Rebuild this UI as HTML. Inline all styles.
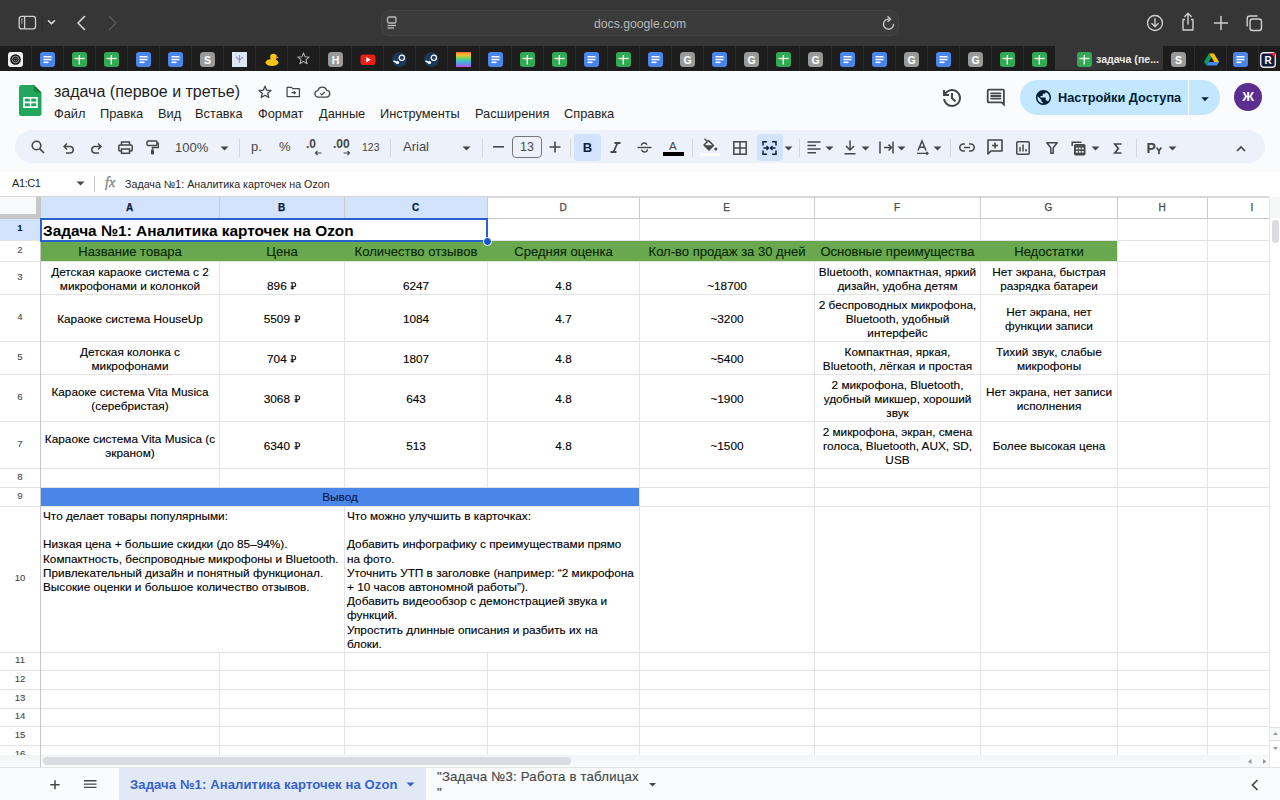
<!DOCTYPE html><html><head><meta charset="utf-8"><style>
*{box-sizing:border-box;margin:0;padding:0}
html,body{width:1280px;height:800px;overflow:hidden;background:#fff;font-family:"Liberation Sans",sans-serif;position:relative}
.a{position:absolute}
svg{position:absolute;overflow:visible}
.t{position:absolute;white-space:nowrap}
.cell{-webkit-text-stroke:0.12px currentColor;position:absolute;display:flex;flex-direction:column;justify-content:center;text-align:center;color:#000;font-size:11.8px;line-height:14.2px;white-space:nowrap;overflow:visible}
</style></head><body>
<div class="a" style="left:0;top:0;width:1280px;height:46px;background:#363636"></div>
<svg style="left:18px;top:15px" width="20" height="16" viewBox="0 0 20 16"><rect x="1.2" y="1.3" width="16.3" height="12.6" rx="2.3" fill="none" stroke="#cfcfcf" stroke-width="1.3"/><line x1="6.6" y1="1.3" x2="6.6" y2="13.9" stroke="#cfcfcf" stroke-width="1.3"/><line x1="3" y1="4.3" x2="4.8" y2="4.3" stroke="#bdbdbd" stroke-width="0.9"/><line x1="3" y1="6.1" x2="4.8" y2="6.1" stroke="#bdbdbd" stroke-width="0.9"/><line x1="3" y1="7.9" x2="4.8" y2="7.9" stroke="#bdbdbd" stroke-width="0.9"/></svg>
<div class="a" style="left:42px;top:16px;width:1px;height:15px;background:#2c2c2c"></div>
<svg style="left:47px;top:19px" width="9" height="7" viewBox="0 0 9 7"><path d="M1.5 1.8 L4.5 4.8 L7.5 1.8" fill="none" stroke="#e0e0e0" stroke-width="1.6" stroke-linecap="round" stroke-linejoin="round"/></svg>
<svg style="left:76px;top:15px" width="10" height="16" viewBox="0 0 10 16"><path d="M8.5 1.5 L2 8 L8.5 14.5" fill="none" stroke="#d8d8d8" stroke-width="1.6" stroke-linecap="round" stroke-linejoin="round"/></svg>
<svg style="left:106px;top:15px" width="12" height="16" viewBox="0 0 12 16"><path d="M3.5 1.5 L10 8 L3.5 14.5" fill="none" stroke="#555555" stroke-width="1.6" stroke-linecap="round" stroke-linejoin="round"/></svg>
<div class="a" style="left:381px;top:10px;width:518px;height:26px;border-radius:8px;background:#3b3b3b;border:1px solid #454545"></div>
<svg style="left:386px;top:16px" width="12" height="14" viewBox="0 0 12 14"><rect x="1.5" y="1" width="8.5" height="6" rx="1.5" fill="none" stroke="#bdbdbd" stroke-width="1.3"/><line x1="1.5" y1="9.5" x2="10" y2="9.5" stroke="#bdbdbd" stroke-width="1.3"/><line x1="1.5" y1="12" x2="8" y2="12" stroke="#bdbdbd" stroke-width="1.3"/></svg>
<div class="t" style="left:594px;top:16.5px;font-size:12.2px;color:#b8b8b8;letter-spacing:0">docs.google.com</div>
<svg style="left:882px;top:16px" width="14" height="15" viewBox="0 0 14 15"><path d="M11.5 8.5 A5 5 0 1 1 7 3.2" fill="none" stroke="#c8c8c8" stroke-width="1.4" stroke-linecap="round"/><path d="M6 0.8 L8.6 3.2 L6 5.6" fill="none" stroke="#c8c8c8" stroke-width="1.4" stroke-linecap="round" stroke-linejoin="round"/></svg>
<svg style="left:1146px;top:14px" width="18" height="18" viewBox="0 0 18 18"><circle cx="9" cy="9" r="7.5" fill="none" stroke="#cfcfcf" stroke-width="1.4"/><path d="M9 4.8 V12.5 M5.8 9.5 L9 12.7 L12.2 9.5" fill="none" stroke="#cfcfcf" stroke-width="1.4" stroke-linecap="round" stroke-linejoin="round"/></svg>
<svg style="left:1180px;top:12px" width="16" height="20" viewBox="0 0 16 20"><path d="M5 7.5 H3 V18 H13 V7.5 H11" fill="none" stroke="#cfcfcf" stroke-width="1.4" stroke-linejoin="round"/><path d="M8 12 V1.5 M4.8 4.5 L8 1.3 L11.2 4.5" fill="none" stroke="#cfcfcf" stroke-width="1.4" stroke-linecap="round" stroke-linejoin="round"/></svg>
<svg style="left:1213px;top:15px" width="16" height="16" viewBox="0 0 16 16"><path d="M8 1.5 V14.5 M1.5 8 H14.5" fill="none" stroke="#d0d0d0" stroke-width="1.5" stroke-linecap="round"/></svg>
<svg style="left:1245px;top:14px" width="18" height="18" viewBox="0 0 18 18"><rect x="5" y="5" width="11.5" height="11.5" rx="2.5" fill="none" stroke="#cfcfcf" stroke-width="1.4"/><path d="M2.2 12.5 V4.5 A2.5 2.5 0 0 1 4.7 2 H12.5" fill="none" stroke="#cfcfcf" stroke-width="1.4"/></svg>
<div class="a" style="left:0;top:46px;width:1280px;height:25px;background:#1d1d1d"></div>
<svg style="left:8px;top:52px" width="15" height="15" viewBox="0 0 15 15"><rect x="0" y="0" width="15" height="15" rx="3" fill="#f0f0f0"/><circle cx="7.5" cy="7.5" r="5.3" fill="#111"/><circle cx="7.5" cy="7.5" r="3.4" fill="none" stroke="#999" stroke-width="1"/><circle cx="7.5" cy="7.5" r="1.5" fill="none" stroke="#888" stroke-width="0.8"/></svg>
<div class="a" style="left:31px;top:46px;width:1px;height:25px;background:#2c2c2c"></div>
<svg style="left:40px;top:52px" width="15" height="15" viewBox="0 0 15 15"><rect x="0" y="0" width="15" height="15" rx="3" fill="#4a86e8"/><rect x="3.5" y="4" width="8" height="1.5" fill="#fff"/><rect x="3.5" y="6.8" width="8" height="1.5" fill="#fff"/><rect x="3.5" y="9.6" width="5" height="1.5" fill="#fff"/></svg>
<div class="a" style="left:63px;top:46px;width:1px;height:25px;background:#2c2c2c"></div>
<svg style="left:72px;top:52px" width="15" height="15" viewBox="0 0 15 15"><rect x="0" y="0" width="15" height="15" rx="3" fill="#34a853"/><rect x="2.5" y="5.8" width="10" height="1.4" fill="#e8ffe8"/><rect x="6.6" y="3" width="1.4" height="9.5" fill="#e8ffe8"/></svg>
<div class="a" style="left:95px;top:46px;width:1px;height:25px;background:#2c2c2c"></div>
<svg style="left:104px;top:52px" width="15" height="15" viewBox="0 0 15 15"><rect x="0" y="0" width="15" height="15" rx="3" fill="#34a853"/><rect x="2.5" y="5.8" width="10" height="1.4" fill="#e8ffe8"/><rect x="6.6" y="3" width="1.4" height="9.5" fill="#e8ffe8"/></svg>
<div class="a" style="left:127px;top:46px;width:1px;height:25px;background:#2c2c2c"></div>
<svg style="left:136px;top:52px" width="15" height="15" viewBox="0 0 15 15"><rect x="0" y="0" width="15" height="15" rx="3" fill="#4a86e8"/><rect x="3.5" y="4" width="8" height="1.5" fill="#fff"/><rect x="3.5" y="6.8" width="8" height="1.5" fill="#fff"/><rect x="3.5" y="9.6" width="5" height="1.5" fill="#fff"/></svg>
<div class="a" style="left:159px;top:46px;width:1px;height:25px;background:#2c2c2c"></div>
<svg style="left:168px;top:52px" width="15" height="15" viewBox="0 0 15 15"><rect x="0" y="0" width="15" height="15" rx="3" fill="#4a86e8"/><rect x="3.5" y="4" width="8" height="1.5" fill="#fff"/><rect x="3.5" y="6.8" width="8" height="1.5" fill="#fff"/><rect x="3.5" y="9.6" width="5" height="1.5" fill="#fff"/></svg>
<div class="a" style="left:191px;top:46px;width:1px;height:25px;background:#2c2c2c"></div>
<svg style="left:200px;top:52px" width="15" height="15" viewBox="0 0 15 15"><rect x="0" y="0" width="15" height="15" rx="3.5" fill="#9a9a9a"/><text x="7.5" y="11.6" text-anchor="middle" font-family="Liberation Sans" font-weight="bold" font-size="10.5" fill="#fff">S</text></svg>
<div class="a" style="left:223px;top:46px;width:1px;height:25px;background:#2c2c2c"></div>
<svg style="left:232px;top:52px" width="15" height="15" viewBox="0 0 15 15"><rect x="0" y="0" width="15" height="15" fill="#dfe6ef"/><path d="M7.5 3 V11 M4 5 L7.5 8 L11 5" stroke="#8aa0c8" stroke-width="1.2" fill="none"/></svg>
<div class="a" style="left:255px;top:46px;width:1px;height:25px;background:#2c2c2c"></div>
<svg style="left:264px;top:52px" width="16" height="15" viewBox="0 0 16 15"><ellipse cx="8" cy="10.5" rx="6.5" ry="3.5" fill="#f5c518"/><circle cx="9.5" cy="5" r="3.3" fill="#f5c518"/><path d="M12.5 4.5 L15 5.3 L12.5 6.2Z" fill="#e8891c"/></svg>
<div class="a" style="left:287px;top:46px;width:1px;height:25px;background:#2c2c2c"></div>
<svg style="left:297px;top:51.5px" width="13" height="13" viewBox="0 0 15 15"><path d="M7.5 1 L9.3 5.6 L14 5.8 L10.3 8.8 L11.6 13.5 L7.5 10.8 L3.4 13.5 L4.7 8.8 L1 5.8 L5.7 5.6Z" fill="none" stroke="#b0b0b0" stroke-width="1.2" stroke-linejoin="round"/></svg>
<div class="a" style="left:319px;top:46px;width:1px;height:25px;background:#2c2c2c"></div>
<svg style="left:328px;top:52px" width="15" height="15" viewBox="0 0 15 15"><rect x="0" y="0" width="15" height="15" rx="3.5" fill="#9a9a9a"/><text x="7.5" y="11.6" text-anchor="middle" font-family="Liberation Sans" font-weight="bold" font-size="10.5" fill="#fff">H</text></svg>
<div class="a" style="left:351px;top:46px;width:1px;height:25px;background:#2c2c2c"></div>
<svg style="left:360px;top:52px" width="16" height="15" viewBox="0 0 16 15"><rect x="0.5" y="2.5" width="15" height="10.5" rx="3" fill="#e62117"/><path d="M6.3 5 L10.8 7.7 L6.3 10.4Z" fill="#fff"/></svg>
<div class="a" style="left:383px;top:46px;width:1px;height:25px;background:#2c2c2c"></div>
<svg style="left:392px;top:52px" width="15" height="15" viewBox="0 0 15 15"><circle cx="7.5" cy="7.5" r="7.3" fill="#1b3a5c"/><circle cx="9.8" cy="5.8" r="2.6" fill="none" stroke="#fff" stroke-width="1.2"/><path d="M1.5 9 L6 11 " stroke="#fff" stroke-width="1.8"/><circle cx="5.5" cy="10.5" r="1.6" fill="#fff"/></svg>
<div class="a" style="left:415px;top:46px;width:1px;height:25px;background:#2c2c2c"></div>
<svg style="left:424px;top:52px" width="15" height="15" viewBox="0 0 15 15"><circle cx="7.5" cy="7.5" r="7.3" fill="#1b3a5c"/><circle cx="9.8" cy="5.8" r="2.6" fill="none" stroke="#fff" stroke-width="1.2"/><path d="M1.5 9 L6 11 " stroke="#fff" stroke-width="1.8"/><circle cx="5.5" cy="10.5" r="1.6" fill="#fff"/></svg>
<div class="a" style="left:447px;top:46px;width:1px;height:25px;background:#2c2c2c"></div>
<svg style="left:456px;top:52px" width="15" height="15" viewBox="0 0 15 15"><defs><linearGradient id="rg" x1="0" y1="0" x2="0" y2="1"><stop offset="0" stop-color="#f26b3a"/><stop offset="0.2" stop-color="#f5c424"/><stop offset="0.45" stop-color="#5ed66a"/><stop offset="0.65" stop-color="#3ab6e0"/><stop offset="1" stop-color="#b356e6"/></linearGradient></defs><rect x="0" y="0" width="15" height="15" fill="url(#rg)"/></svg>
<div class="a" style="left:479px;top:46px;width:1px;height:25px;background:#2c2c2c"></div>
<svg style="left:488px;top:52px" width="15" height="15" viewBox="0 0 15 15"><rect x="0" y="0" width="15" height="15" rx="3" fill="#4a86e8"/><rect x="3.5" y="4" width="8" height="1.5" fill="#fff"/><rect x="3.5" y="6.8" width="8" height="1.5" fill="#fff"/><rect x="3.5" y="9.6" width="5" height="1.5" fill="#fff"/></svg>
<div class="a" style="left:511px;top:46px;width:1px;height:25px;background:#2c2c2c"></div>
<svg style="left:520px;top:52px" width="15" height="15" viewBox="0 0 15 15"><rect x="0" y="0" width="15" height="15" rx="3" fill="#34a853"/><rect x="2.5" y="5.8" width="10" height="1.4" fill="#e8ffe8"/><rect x="6.6" y="3" width="1.4" height="9.5" fill="#e8ffe8"/></svg>
<div class="a" style="left:543px;top:46px;width:1px;height:25px;background:#2c2c2c"></div>
<svg style="left:552px;top:52px" width="15" height="15" viewBox="0 0 15 15"><rect x="0" y="0" width="15" height="15" rx="3" fill="#34a853"/><rect x="2.5" y="5.8" width="10" height="1.4" fill="#e8ffe8"/><rect x="6.6" y="3" width="1.4" height="9.5" fill="#e8ffe8"/></svg>
<div class="a" style="left:575px;top:46px;width:1px;height:25px;background:#2c2c2c"></div>
<svg style="left:584px;top:52px" width="15" height="15" viewBox="0 0 15 15"><rect x="0" y="0" width="15" height="15" rx="3" fill="#4a86e8"/><rect x="3.5" y="4" width="8" height="1.5" fill="#fff"/><rect x="3.5" y="6.8" width="8" height="1.5" fill="#fff"/><rect x="3.5" y="9.6" width="5" height="1.5" fill="#fff"/></svg>
<div class="a" style="left:607px;top:46px;width:1px;height:25px;background:#2c2c2c"></div>
<svg style="left:616px;top:52px" width="15" height="15" viewBox="0 0 15 15"><rect x="0" y="0" width="15" height="15" rx="3" fill="#34a853"/><rect x="2.5" y="5.8" width="10" height="1.4" fill="#e8ffe8"/><rect x="6.6" y="3" width="1.4" height="9.5" fill="#e8ffe8"/></svg>
<div class="a" style="left:639px;top:46px;width:1px;height:25px;background:#2c2c2c"></div>
<svg style="left:648px;top:52px" width="15" height="15" viewBox="0 0 15 15"><rect x="0" y="0" width="15" height="15" rx="3" fill="#4a86e8"/><rect x="3.5" y="4" width="8" height="1.5" fill="#fff"/><rect x="3.5" y="6.8" width="8" height="1.5" fill="#fff"/><rect x="3.5" y="9.6" width="5" height="1.5" fill="#fff"/></svg>
<div class="a" style="left:671px;top:46px;width:1px;height:25px;background:#2c2c2c"></div>
<svg style="left:680px;top:52px" width="15" height="15" viewBox="0 0 15 15"><rect x="0" y="0" width="15" height="15" rx="3.5" fill="#9a9a9a"/><text x="7.5" y="11.6" text-anchor="middle" font-family="Liberation Sans" font-weight="bold" font-size="10.5" fill="#fff">G</text></svg>
<div class="a" style="left:703px;top:46px;width:1px;height:25px;background:#2c2c2c"></div>
<svg style="left:712px;top:52px" width="15" height="15" viewBox="0 0 15 15"><rect x="0" y="0" width="15" height="15" rx="3" fill="#4a86e8"/><rect x="3.5" y="4" width="8" height="1.5" fill="#fff"/><rect x="3.5" y="6.8" width="8" height="1.5" fill="#fff"/><rect x="3.5" y="9.6" width="5" height="1.5" fill="#fff"/></svg>
<div class="a" style="left:735px;top:46px;width:1px;height:25px;background:#2c2c2c"></div>
<svg style="left:744px;top:52px" width="15" height="15" viewBox="0 0 15 15"><rect x="0" y="0" width="15" height="15" rx="3.5" fill="#9a9a9a"/><text x="7.5" y="11.6" text-anchor="middle" font-family="Liberation Sans" font-weight="bold" font-size="10.5" fill="#fff">G</text></svg>
<div class="a" style="left:767px;top:46px;width:1px;height:25px;background:#2c2c2c"></div>
<svg style="left:776px;top:52px" width="15" height="15" viewBox="0 0 15 15"><rect x="0" y="0" width="15" height="15" rx="3" fill="#34a853"/><rect x="2.5" y="5.8" width="10" height="1.4" fill="#e8ffe8"/><rect x="6.6" y="3" width="1.4" height="9.5" fill="#e8ffe8"/></svg>
<div class="a" style="left:799px;top:46px;width:1px;height:25px;background:#2c2c2c"></div>
<svg style="left:808px;top:52px" width="15" height="15" viewBox="0 0 15 15"><rect x="0" y="0" width="15" height="15" rx="3.5" fill="#9a9a9a"/><text x="7.5" y="11.6" text-anchor="middle" font-family="Liberation Sans" font-weight="bold" font-size="10.5" fill="#fff">G</text></svg>
<div class="a" style="left:831px;top:46px;width:1px;height:25px;background:#2c2c2c"></div>
<svg style="left:840px;top:52px" width="15" height="15" viewBox="0 0 15 15"><rect x="0" y="0" width="15" height="15" rx="3" fill="#4a86e8"/><rect x="3.5" y="4" width="8" height="1.5" fill="#fff"/><rect x="3.5" y="6.8" width="8" height="1.5" fill="#fff"/><rect x="3.5" y="9.6" width="5" height="1.5" fill="#fff"/></svg>
<div class="a" style="left:863px;top:46px;width:1px;height:25px;background:#2c2c2c"></div>
<svg style="left:872px;top:52px" width="15" height="15" viewBox="0 0 15 15"><rect x="0" y="0" width="15" height="15" rx="3" fill="#4a86e8"/><rect x="3.5" y="4" width="8" height="1.5" fill="#fff"/><rect x="3.5" y="6.8" width="8" height="1.5" fill="#fff"/><rect x="3.5" y="9.6" width="5" height="1.5" fill="#fff"/></svg>
<div class="a" style="left:895px;top:46px;width:1px;height:25px;background:#2c2c2c"></div>
<svg style="left:904px;top:52px" width="15" height="15" viewBox="0 0 15 15"><rect x="0" y="0" width="15" height="15" rx="3.5" fill="#9a9a9a"/><text x="7.5" y="11.6" text-anchor="middle" font-family="Liberation Sans" font-weight="bold" font-size="10.5" fill="#fff">G</text></svg>
<div class="a" style="left:927px;top:46px;width:1px;height:25px;background:#2c2c2c"></div>
<svg style="left:936px;top:52px" width="15" height="15" viewBox="0 0 15 15"><rect x="0" y="0" width="15" height="15" rx="3" fill="#4a86e8"/><rect x="3.5" y="4" width="8" height="1.5" fill="#fff"/><rect x="3.5" y="6.8" width="8" height="1.5" fill="#fff"/><rect x="3.5" y="9.6" width="5" height="1.5" fill="#fff"/></svg>
<div class="a" style="left:959px;top:46px;width:1px;height:25px;background:#2c2c2c"></div>
<svg style="left:968px;top:52px" width="15" height="15" viewBox="0 0 15 15"><rect x="0" y="0" width="15" height="15" rx="3.5" fill="#9a9a9a"/><text x="7.5" y="11.6" text-anchor="middle" font-family="Liberation Sans" font-weight="bold" font-size="10.5" fill="#fff">G</text></svg>
<div class="a" style="left:991px;top:46px;width:1px;height:25px;background:#2c2c2c"></div>
<svg style="left:1000px;top:52px" width="15" height="15" viewBox="0 0 15 15"><rect x="0" y="0" width="15" height="15" rx="3" fill="#34a853"/><rect x="2.5" y="5.8" width="10" height="1.4" fill="#e8ffe8"/><rect x="6.6" y="3" width="1.4" height="9.5" fill="#e8ffe8"/></svg>
<div class="a" style="left:1023px;top:46px;width:1px;height:25px;background:#2c2c2c"></div>
<svg style="left:1032px;top:52px" width="15" height="15" viewBox="0 0 15 15"><rect x="0" y="0" width="15" height="15" rx="3" fill="#34a853"/><rect x="2.5" y="5.8" width="10" height="1.4" fill="#e8ffe8"/><rect x="6.6" y="3" width="1.4" height="9.5" fill="#e8ffe8"/></svg>
<div class="a" style="left:1055px;top:46px;width:108px;height:24px;background:#363636"></div>
<svg style="left:1077px;top:52px" width="15" height="15" viewBox="0 0 15 15"><rect x="0" y="0" width="15" height="15" rx="3" fill="#34a853"/><rect x="2.5" y="5.8" width="10" height="1.4" fill="#e8ffe8"/><rect x="6.6" y="3" width="1.4" height="9.5" fill="#e8ffe8"/></svg>
<div class="t" style="left:1096px;top:53px;font-size:10.6px;font-weight:bold;color:#e8e8e8">задача (пе...</div>
<svg style="left:1171px;top:52px" width="15" height="15" viewBox="0 0 15 15"><rect x="0" y="0" width="15" height="15" rx="3.5" fill="#9a9a9a"/><text x="7.5" y="11.6" text-anchor="middle" font-family="Liberation Sans" font-weight="bold" font-size="10.5" fill="#fff">S</text></svg>
<div class="a" style="left:1194px;top:46px;width:1px;height:25px;background:#2c2c2c"></div>
<svg style="left:1204px;top:53px" width="15" height="13" viewBox="0 0 15 13"><path d="M5 0.5 H10 L15 9 L12.5 12.5 Z" fill="#fbbc04"/><path d="M5 0.5 L0 9 L2.5 12.5 L7.5 4.3Z" fill="#0f9d58"/><path d="M2.5 12.5 H12.5 L15 9 H4.8Z" fill="#4285f4"/></svg>
<div class="a" style="left:1226px;top:46px;width:1px;height:25px;background:#2c2c2c"></div>
<svg style="left:1233px;top:52px" width="15" height="15" viewBox="0 0 15 15"><rect x="0" y="0" width="15" height="15" rx="3" fill="#4a86e8"/><rect x="3.5" y="4" width="8" height="1.5" fill="#fff"/><rect x="3.5" y="6.8" width="8" height="1.5" fill="#fff"/><rect x="3.5" y="9.6" width="5" height="1.5" fill="#fff"/></svg>
<div class="a" style="left:1258px;top:46px;width:1px;height:25px;background:#2c2c2c"></div>
<svg style="left:1260px;top:51.5px" width="16" height="16" viewBox="0 0 16 16"><rect x="0.7" y="0.7" width="14.6" height="14.6" rx="3" fill="#111a3a" stroke="#e8e8e8" stroke-width="1.4"/><path d="M10 1 H15 V6Z" fill="#e5203b"/><text x="8" y="12" text-anchor="middle" font-family="Liberation Sans" font-weight="bold" font-size="10" fill="#fff">R</text></svg>
<div class="a" style="left:0;top:71px;width:1280px;height:125px;background:#f9fbfd"></div>
<svg style="left:19px;top:85px" width="23" height="31" viewBox="0 0 23 31"><path d="M2.5 0 H15 L22.5 7.5 V28.5 A2.5 2.5 0 0 1 20 31 H2.5 A2.5 2.5 0 0 1 0 28.5 V2.5 A2.5 2.5 0 0 1 2.5 0Z" fill="#22a55d"/><path d="M15 0 L22.5 7.5 H17.5 A2.5 2.5 0 0 1 15 5Z" fill="#188038"/><rect x="4.2" y="12" width="14.6" height="11" fill="#fff"/><rect x="5.8" y="13.6" width="5" height="3" fill="#22a55d"/><rect x="12.2" y="13.6" width="5" height="3" fill="#22a55d"/><rect x="5.8" y="18.3" width="5" height="3" fill="#22a55d"/><rect x="12.2" y="18.3" width="5" height="3" fill="#22a55d"/></svg>
<div class="t" style="left:54px;top:82.5px;font-size:16px;color:#1f1f1f">задача (первое и третье)</div>
<svg style="left:258px;top:84.8px" width="14" height="14" viewBox="0 0 15 15"><path d="M7.5 1.3 L9.3 5.5 L13.9 5.9 L10.4 8.9 L11.5 13.4 L7.5 11 L3.5 13.4 L4.6 8.9 L1.1 5.9 L5.7 5.5Z" fill="none" stroke="#444746" stroke-width="1.4" stroke-linejoin="round"/></svg>
<svg style="left:286px;top:86.3px" width="14.5" height="11.5" viewBox="0 0 16 13"><path d="M1 1.5 H6 L7.5 3 H15 V12 H1Z" fill="none" stroke="#444746" stroke-width="1.4" stroke-linejoin="round"/><path d="M6 7.5 H10.5 M8.8 5.8 L10.5 7.5 L8.8 9.2" fill="none" stroke="#444746" stroke-width="1.3"/></svg>
<svg style="left:313.5px;top:86px" width="17" height="12" viewBox="0 0 18 13"><path d="M4.5 12 A3.5 3.5 0 0 1 4 5 A5 5 0 0 1 13.5 4.5 A3.8 3.8 0 0 1 13.8 12Z" fill="none" stroke="#444746" stroke-width="1.4" stroke-linejoin="round"/><path d="M6.5 8 L8.3 9.6 L11.5 6.5" fill="none" stroke="#444746" stroke-width="1.3"/></svg>
<div class="t" style="left:54px;top:105.5px;font-size:12.8px;color:#1f1f1f">Файл</div>
<div class="t" style="left:100px;top:105.5px;font-size:12.8px;color:#1f1f1f">Правка</div>
<div class="t" style="left:158px;top:105.5px;font-size:12.8px;color:#1f1f1f">Вид</div>
<div class="t" style="left:195px;top:105.5px;font-size:12.8px;color:#1f1f1f">Вставка</div>
<div class="t" style="left:258px;top:105.5px;font-size:12.8px;color:#1f1f1f">Формат</div>
<div class="t" style="left:319px;top:105.5px;font-size:12.8px;color:#1f1f1f">Данные</div>
<div class="t" style="left:380px;top:105.5px;font-size:12.8px;color:#1f1f1f">Инструменты</div>
<div class="t" style="left:475px;top:105.5px;font-size:12.8px;color:#1f1f1f">Расширения</div>
<div class="t" style="left:564px;top:105.5px;font-size:12.8px;color:#1f1f1f">Справка</div>
<svg style="left:940px;top:86px" width="24" height="24" viewBox="0 -960 960 960"><path fill="#444746" d="M480-120q-138 0-240.5-91.5T122-440h82q14 104 92.5 172T480-200q117 0 198.5-81.5T760-480q0-117-81.5-198.5T480-760q-69 0-129 32t-101 88h110v80H120v-240h80v94q51-64 124.5-99T480-840q75 0 140.5 28.5t114 77q48.5 48.5 77 114T840-480q0 75-28.5 140.5t-77 114q-48.5 48.5-114 77T480-120Zm112-192L440-464v-216h80v184l128 128-56 56Z"/></svg>
<svg style="left:985.2px;top:87.2px" width="21.6" height="21.6" viewBox="0 -960 960 960"><path fill="#444746" d="M240-400h480v-80H240v80Zm0-120h480v-80H240v80Zm0-120h480v-80H240v80ZM880-80 720-240H160q-33 0-56.5-23.5T80-320v-480q0-33 23.5-56.5T160-880h640q33 0 56.5 23.5T880-800v720ZM160-320h594l46 45v-525H160v480Zm0 0v-480 480Z"/></svg>
<div class="a" style="left:1020px;top:80px;width:200px;height:35px;border-radius:17.5px;background:#c2e7ff"></div>
<div class="a" style="left:1188px;top:80px;width:1px;height:35px;background:#f9fbfd"></div>
<svg style="left:1036px;top:90px" width="15" height="15" viewBox="2 2 20 20"><path fill="#001d35" d="M12 2C6.48 2 2 6.48 2 12s4.48 10 10 10 10-4.48 10-10S17.52 2 12 2zm-1 17.93c-3.950-.49-7-3.850-7-7.930 0-.62.08-1.21.21-1.79L9 15v1c0 1.1.9 2 2 2v1.93zm6.9-2.54c-.26-.81-1-1.39-1.9-1.39h-1v-3c0-.55-.45-1-1-1H8v-2h2c.55 0 1-.45 1-1V7h2c1.1 0 2-.9 2-2v-.41c2.930 1.19 5 4.060 5 7.410 0 2.080-.8 3.970-2.1 5.390z"/></svg>
<div class="t" style="left:1058px;top:90px;font-size:12.75px;font-weight:bold;color:#001d35">Настройки Доступа</div>
<svg style="left:1200.5px;top:96.5px" width="8" height="5" viewBox="0 0 8 5"><path d="M0.3 0.3 H7.7 L4 4.3Z" fill="#001d35"/></svg>
<div class="a" style="left:1234px;top:83px;width:28px;height:28px;border-radius:50%;background:#5c2d91"></div>
<div class="t" style="left:1234px;top:89px;width:28px;text-align:center;font-size:13px;font-weight:bold;color:#fff">Ж</div>
<div class="a" style="left:15px;top:129.5px;width:1250px;height:33px;border-radius:16.5px;background:#edf2fa"></div>
<div class="a" style="left:0;top:1px;width:1280px;height:0">
<svg style="left:31px;top:139px" width="14" height="14" viewBox="0 0 14 14"><circle cx="5.5" cy="5.5" r="4.3" fill="none" stroke="#444746" stroke-width="1.6"/><path d="M8.7 8.7 L13 13" stroke="#444746" stroke-width="1.7"/></svg>
<svg style="left:62px;top:141px" width="13" height="11" viewBox="0 0 13 11"><path d="M3 4.5 H8.5 A3.3 3.3 0 0 1 8.5 11 H4" fill="none" stroke="#444746" stroke-width="1.5"/><path d="M5 1.5 L2 4.5 L5 7.5" fill="none" stroke="#444746" stroke-width="1.5"/></svg>
<svg style="left:90px;top:141px" width="13" height="11" viewBox="0 0 13 11"><path d="M10 4.5 H4.5 A3.3 3.3 0 0 0 4.5 11 H9" fill="none" stroke="#444746" stroke-width="1.5"/><path d="M8 1.5 L11 4.5 L8 7.5" fill="none" stroke="#444746" stroke-width="1.5"/></svg>
<svg style="left:118px;top:140px" width="15" height="13" viewBox="0 0 15 13"><path d="M3.5 4 V1 H11.5 V4" fill="none" stroke="#444746" stroke-width="1.5"/><rect x="0.8" y="4" width="13.4" height="6" rx="1.2" fill="none" stroke="#444746" stroke-width="1.5"/><rect x="3.5" y="8" width="8" height="4.3" fill="#edf2fa" stroke="#444746" stroke-width="1.5"/></svg>
<svg style="left:146px;top:139px" width="13" height="15" viewBox="0 0 13 15"><rect x="1" y="1" width="10" height="4.5" rx="1" fill="none" stroke="#444746" stroke-width="1.5"/><path d="M11 3.2 H12.3 V7.5 H6.5 V9.5" fill="none" stroke="#444746" stroke-width="1.4"/><rect x="5" y="9.5" width="3" height="5" rx="0.8" fill="#444746"/></svg>
<div class="t" style="left:175px;top:139px;font-size:13px;color:#444746">100%</div>
<svg style="left:220px;top:145px" width="9" height="5" viewBox="0 0 9 5"><path d="M0.5 0.5 H8.5 L4.5 4.5Z" fill="#444746"/></svg>
<div class="a" style="left:239px;top:137.5px;width:1px;height:18px;background:#d3d6da"></div>
<div class="t" style="left:251px;top:138px;font-size:13px;color:#444746">р.</div>
<div class="t" style="left:279px;top:138px;font-size:13px;color:#444746">%</div>
<div class="t" style="left:306px;top:136px;font-size:12px;font-weight:bold;color:#444746">.0</div>
<svg style="left:314px;top:149px" width="8" height="6" viewBox="0 0 8 6"><path d="M7.5 3 H1.5 M3.5 1 L1.5 3 L3.5 5" fill="none" stroke="#444746" stroke-width="1.2"/></svg>
<div class="t" style="left:333px;top:136px;font-size:12px;font-weight:bold;color:#444746">.00</div>
<svg style="left:343px;top:149px" width="8" height="6" viewBox="0 0 8 6"><path d="M0.5 3 H6.5 M4.5 1 L6.5 3 L4.5 5" fill="none" stroke="#444746" stroke-width="1.2"/></svg>
<div class="t" style="left:362px;top:140px;font-size:10.5px;color:#444746">123</div>
<div class="a" style="left:390px;top:137.5px;width:1px;height:18px;background:#d3d6da"></div>
<div class="t" style="left:403px;top:138px;font-size:13px;color:#444746">Arial</div>
<svg style="left:462px;top:145px" width="9" height="5" viewBox="0 0 9 5"><path d="M0.5 0.5 H8.5 L4.5 4.5Z" fill="#444746"/></svg>
<div class="a" style="left:482px;top:137.5px;width:1px;height:18px;background:#d3d6da"></div>
<svg style="left:493px;top:145px" width="11" height="2" viewBox="0 0 11 2"><rect x="0" y="0" width="11" height="1.6" fill="#444746"/></svg>
<div class="a" style="left:512px;top:135px;width:30px;height:22px;border:1px solid #747775;border-radius:4px"></div>
<div class="t" style="left:512px;top:139px;width:30px;text-align:center;font-size:12.5px;color:#444746">13</div>
<svg style="left:549px;top:140px" width="12" height="12" viewBox="0 0 12 12"><path d="M6 0.5 V11.5 M0.5 6 H11.5" stroke="#444746" stroke-width="1.6"/></svg>
<div class="a" style="left:570px;top:137.5px;width:1px;height:18px;background:#d3d6da"></div>
<div class="a" style="left:574px;top:133px;width:27px;height:27px;border-radius:4px;background:#d3e3fd"></div>
<div class="t" style="left:574px;top:139px;width:27px;text-align:center;font-size:13px;font-weight:bold;color:#0b1e3d">B</div>
<svg style="left:610px;top:141px" width="11" height="11" viewBox="0 0 11 11"><path d="M4.5 1 H10.5 M0.5 10 H6.5 M7.5 1 L3.5 10" fill="none" stroke="#444746" stroke-width="1.8"/></svg>
<svg style="left:637px;top:141px" width="15" height="11" viewBox="0 0 15 11"><path d="M10 2.8 C9.5 1.5 8.5 1 7.3 1 C5.5 1 4.3 2 4.6 3.5 M4.5 7.8 C5 9.3 6 10 7.5 10 C9.3 10 10.5 9 10.2 7.3" fill="none" stroke="#444746" stroke-width="1.5"/><path d="M0.5 5.5 H14.5" stroke="#444746" stroke-width="1.4"/></svg>
<div class="t" style="left:669px;top:138.5px;font-size:11.5px;color:#444746">A</div>
<div class="a" style="left:663px;top:151px;width:21px;height:4px;background:#000"></div>
<div class="a" style="left:692px;top:137.5px;width:1px;height:18px;background:#d3d6da"></div>
<svg style="left:702px;top:137px" width="16" height="14" viewBox="0 0 16 14"><path d="M2.5 0.8 L5 3.3" stroke="#444746" stroke-width="1.4"/><path d="M6.5 2.5 L11.5 7.5 L7 12 L2 7Z" fill="none" stroke="#444746" stroke-width="1.5" stroke-linejoin="round"/><path d="M2.3 7.3 H11 L7 11.5Z" fill="#444746"/><circle cx="13.8" cy="11" r="1.5" fill="#444746"/></svg>
<div class="a" style="left:700px;top:152px;width:20px;height:3px;background:#fff"></div>
<svg style="left:733px;top:140px" width="14" height="14" viewBox="0 0 14 14"><rect x="0.8" y="0.8" width="12.4" height="12.4" fill="none" stroke="#444746" stroke-width="1.5"/><path d="M7 0.8 V13.2 M0.8 7 H13.2" stroke="#444746" stroke-width="1.5"/></svg>
<div class="a" style="left:757px;top:133px;width:26px;height:27px;border-radius:4px;background:#d3e3fd"></div>
<svg style="left:762px;top:140px" width="15" height="14" viewBox="0 0 15 14"><path d="M5 0.8 H1 V4.5 M1 9.5 V13.2 H5 M10 0.8 H14 V4.5 M14 9.5 V13.2 H10" fill="none" stroke="#0b1e3d" stroke-width="1.5"/><path d="M1.5 7 H6.3 M4.5 5 L6.5 7 L4.5 9 M13.5 7 H8.7 M10.5 5 L8.5 7 L10.5 9" fill="none" stroke="#0b1e3d" stroke-width="1.4"/></svg>
<svg style="left:784px;top:145px" width="9" height="5" viewBox="0 0 9 5"><path d="M0.5 0.5 H8.5 L4.5 4.5Z" fill="#444746"/></svg>
<div class="a" style="left:799px;top:137.5px;width:1px;height:18px;background:#d3d6da"></div>
<svg style="left:807px;top:140px" width="14" height="13" viewBox="0 0 14 13"><path d="M0.5 1 H13.5 M0.5 4.5 H9 M0.5 8 H13.5 M0.5 11.7 H9" stroke="#444746" stroke-width="1.5"/></svg>
<svg style="left:825px;top:145px" width="9" height="5" viewBox="0 0 9 5"><path d="M0.5 0.5 H8.5 L4.5 4.5Z" fill="#444746"/></svg>
<svg style="left:844px;top:139px" width="12" height="15" viewBox="0 0 12 15"><path d="M6 0.5 V10 M2 6 L6 10 L10 6 M0.5 13.7 H11.5" fill="none" stroke="#444746" stroke-width="1.5"/></svg>
<svg style="left:861px;top:145px" width="9" height="5" viewBox="0 0 9 5"><path d="M0.5 0.5 H8.5 L4.5 4.5Z" fill="#444746"/></svg>
<svg style="left:879px;top:140px" width="15" height="13" viewBox="0 0 15 13"><path d="M1 0.5 V12.5 M5 6.5 H12.5 M9.5 3.5 L12.5 6.5 L9.5 9.5 M14 0.5 V12.5" fill="none" stroke="#444746" stroke-width="1.5"/></svg>
<svg style="left:897px;top:145px" width="9" height="5" viewBox="0 0 9 5"><path d="M0.5 0.5 H8.5 L4.5 4.5Z" fill="#444746"/></svg>
<svg style="left:916px;top:139px" width="14" height="15" viewBox="0 0 14 15"><path d="M2 10.5 L6 1 L10 10.5 M3.5 7.3 H8.5" fill="none" stroke="#444746" stroke-width="1.5"/><path d="M1 13.3 H12 M10.5 11.8 L12 13.3 L10.5 14.8" fill="none" stroke="#444746" stroke-width="1.3"/></svg>
<svg style="left:933px;top:145px" width="9" height="5" viewBox="0 0 9 5"><path d="M0.5 0.5 H8.5 L4.5 4.5Z" fill="#444746"/></svg>
<div class="a" style="left:950px;top:137.5px;width:1px;height:18px;background:#d3d6da"></div>
<svg style="left:959px;top:142px" width="16" height="9" viewBox="0 0 16 9"><path d="M6 1 H4.3 A3.5 3.5 0 0 0 4.3 8 H6 M10 1 H11.7 A3.5 3.5 0 0 1 11.7 8 H10 M5 4.5 H11" fill="none" stroke="#444746" stroke-width="1.6"/></svg>
<svg style="left:987px;top:138px" width="16" height="16" viewBox="0 0 16 16"><path d="M1 1 H15 V12 H4 L1 15Z" fill="none" stroke="#444746" stroke-width="1.6" stroke-linejoin="round"/><path d="M8 3.5 V9.5 M5 6.5 H11" stroke="#444746" stroke-width="1.6"/></svg>
<svg style="left:1016px;top:140px" width="14" height="14" viewBox="0 0 14 14"><rect x="0.8" y="0.8" width="12.4" height="12.4" rx="1" fill="none" stroke="#444746" stroke-width="1.5"/><path d="M4 10.5 V6 M7 10.5 V3.5 M10 10.5 V8" stroke="#444746" stroke-width="1.5"/></svg>
<svg style="left:1046px;top:141px" width="12" height="12" viewBox="0 0 12 12"><path d="M0.8 0.8 H11.2 L7.2 5.8 V11.2 H4.8 V5.8Z" fill="none" stroke="#444746" stroke-width="1.5" stroke-linejoin="round"/></svg>
<svg style="left:1071px;top:140px" width="15" height="15" viewBox="0 0 15 15"><path d="M1.2 5 V1.2 H10.5" fill="none" stroke="#444746" stroke-width="1.5"/><rect x="3" y="3" width="11.5" height="11.5" rx="1.8" fill="#444746"/><rect x="4.8" y="6.6" width="2" height="1.8" fill="#edf2fa"/><rect x="7.75" y="6.6" width="2" height="1.8" fill="#edf2fa"/><rect x="10.7" y="6.6" width="2" height="1.8" fill="#edf2fa"/><rect x="4.8" y="9.9" width="2" height="1.8" fill="#edf2fa"/><rect x="7.75" y="9.9" width="2" height="1.8" fill="#edf2fa"/><rect x="10.7" y="9.9" width="2" height="1.8" fill="#edf2fa"/><rect x="4.8" y="4.4" width="7.9" height="1" fill="#5d605f"/></svg>
<svg style="left:1091px;top:145px" width="9" height="5" viewBox="0 0 9 5"><path d="M0.5 0.5 H8.5 L4.5 4.5Z" fill="#444746"/></svg>
<svg style="left:1114px;top:141.5px" width="8" height="11" viewBox="0 0 8 11"><path d="M7.5 1 H0.8 L4.3 5.5 L0.8 10 H7.5" fill="none" stroke="#444746" stroke-width="1.7" stroke-linejoin="miter"/></svg>
<div class="a" style="left:1136px;top:137.5px;width:1px;height:18px;background:#d3d6da"></div>
<div class="t" style="left:1146.5px;top:138.5px;font-size:14px;font-weight:bold;color:#444746">Р</div>
<svg style="left:1156px;top:146px" width="6" height="7.5" viewBox="0 0 6 7.5"><path d="M0.6 0.6 L3 3.8 L5.4 0.6 M3 3.8 V7.3" fill="none" stroke="#444746" stroke-width="1.6"/></svg>
<svg style="left:1168px;top:145px" width="9" height="5" viewBox="0 0 9 5"><path d="M0.5 0.5 H8.5 L4.5 4.5Z" fill="#444746"/></svg>
<svg style="left:1236px;top:144px" width="10" height="7" viewBox="0 0 10 7"><path d="M1 6 L5 2 L9 6" fill="none" stroke="#444746" stroke-width="1.7"/></svg>
</div>
<div class="a" style="left:0;top:172px;width:1280px;height:25px;background:#fff"></div>
<div class="t" style="left:12px;top:177px;font-size:11px;letter-spacing:-0.4px;color:#1f1f1f">A1:C1</div>
<svg style="left:76px;top:181px" width="9" height="5" viewBox="0 0 9 5"><path d="M0.5 0.5 H8.5 L4.5 4.5Z" fill="#444746"/></svg>
<div class="a" style="left:94px;top:176px;width:1px;height:16px;background:#c7c7c7"></div>
<div class="t" style="left:105px;top:175px;font-size:14px;font-style:italic;font-family:'Liberation Serif',serif;-webkit-text-stroke:0.4px #8a8a8a;color:#8a8a8a">fx</div>
<div class="t" style="left:125px;top:178px;font-size:10.7px;color:#1f1f1f">Задача №1: Аналитика карточек на Ozon</div>
<div class="a" style="left:0;top:196px;width:1269px;height:2px;background:#d6d8dc"></div>
<div class="a" style="left:41px;top:197px;width:446px;height:21px;background:#d3e3fd"></div>
<div class="a" style="left:0;top:219px;width:40px;height:21px;background:#d3e3fd"></div>
<div class="a" style="left:0;top:197px;width:40px;height:21px;background:#f8f9fa"></div>
<div class="a" style="left:36px;top:197px;width:4px;height:22px;background:#c7c7c7"></div>
<div class="a" style="left:0;top:214px;width:40px;height:4px;background:#c7c7c7"></div>
<div class="a" style="left:0;top:218px;width:1269px;height:1px;background:#c4c7c5"></div>
<div class="a" style="left:0;top:240px;width:1269px;height:1px;background:#e2e3e3"></div>
<div class="a" style="left:0;top:261px;width:1269px;height:1px;background:#e2e3e3"></div>
<div class="a" style="left:0;top:294px;width:1269px;height:1px;background:#e2e3e3"></div>
<div class="a" style="left:0;top:341px;width:1269px;height:1px;background:#e2e3e3"></div>
<div class="a" style="left:0;top:374px;width:1269px;height:1px;background:#e2e3e3"></div>
<div class="a" style="left:0;top:421px;width:1269px;height:1px;background:#e2e3e3"></div>
<div class="a" style="left:0;top:468px;width:1269px;height:1px;background:#e2e3e3"></div>
<div class="a" style="left:0;top:487px;width:1269px;height:1px;background:#e2e3e3"></div>
<div class="a" style="left:0;top:506px;width:1269px;height:1px;background:#e2e3e3"></div>
<div class="a" style="left:0;top:652px;width:1269px;height:1px;background:#e2e3e3"></div>
<div class="a" style="left:0;top:670px;width:1269px;height:1px;background:#e2e3e3"></div>
<div class="a" style="left:0;top:689px;width:1269px;height:1px;background:#e2e3e3"></div>
<div class="a" style="left:0;top:708px;width:1269px;height:1px;background:#e2e3e3"></div>
<div class="a" style="left:0;top:726px;width:1269px;height:1px;background:#e2e3e3"></div>
<div class="a" style="left:0;top:745px;width:1269px;height:1px;background:#e2e3e3"></div>
<div class="a" style="left:40px;top:197px;width:1px;height:558px;background:#c4c7c5"></div>
<div class="a" style="left:219px;top:197px;width:1px;height:21px;background:#cdcdcd"></div>
<div class="a" style="left:219px;top:240px;width:1px;height:247px;background:#e2e3e3"></div>
<div class="a" style="left:219px;top:652px;width:1px;height:103px;background:#e2e3e3"></div>
<div class="a" style="left:344px;top:197px;width:1px;height:21px;background:#cdcdcd"></div>
<div class="a" style="left:344px;top:240px;width:1px;height:247px;background:#e2e3e3"></div>
<div class="a" style="left:344px;top:652px;width:1px;height:103px;background:#e2e3e3"></div>
<div class="a" style="left:344px;top:506px;width:1px;height:146px;background:#e2e3e3"></div>
<div class="a" style="left:487px;top:197px;width:1px;height:21px;background:#cdcdcd"></div>
<div class="a" style="left:487px;top:240px;width:1px;height:247px;background:#e2e3e3"></div>
<div class="a" style="left:487px;top:652px;width:1px;height:103px;background:#e2e3e3"></div>
<div class="a" style="left:639px;top:197px;width:1px;height:21px;background:#cdcdcd"></div>
<div class="a" style="left:639px;top:218px;width:1px;height:537px;background:#e2e3e3"></div>
<div class="a" style="left:814px;top:197px;width:1px;height:21px;background:#cdcdcd"></div>
<div class="a" style="left:814px;top:218px;width:1px;height:537px;background:#e2e3e3"></div>
<div class="a" style="left:980px;top:197px;width:1px;height:21px;background:#cdcdcd"></div>
<div class="a" style="left:980px;top:218px;width:1px;height:537px;background:#e2e3e3"></div>
<div class="a" style="left:1117px;top:197px;width:1px;height:21px;background:#cdcdcd"></div>
<div class="a" style="left:1117px;top:218px;width:1px;height:537px;background:#e2e3e3"></div>
<div class="a" style="left:1207px;top:197px;width:1px;height:21px;background:#cdcdcd"></div>
<div class="a" style="left:1207px;top:218px;width:1px;height:537px;background:#e2e3e3"></div>
<div class="a" style="left:1269px;top:197px;width:1px;height:21px;background:#cdcdcd"></div>
<div class="a" style="left:1269px;top:218px;width:1px;height:537px;background:#e2e3e3"></div>
<div class="a" style="left:0;top:218px;width:1269px;height:1px;background:#c4c7c5"></div>
<div class="a" style="left:41px;top:241px;width:1076px;height:20px;background:#6aa84f"></div>
<div class="a" style="left:41px;top:488px;width:598px;height:18px;background:#4a86e8"></div>
<div class="t" style="-webkit-text-stroke:0.25px #0b1e3d;left:40px;top:202px;width:179px;text-align:center;font-size:10px;font-weight:bold;color:#0b1e3d">A</div>
<div class="t" style="-webkit-text-stroke:0.25px #0b1e3d;left:219px;top:202px;width:125px;text-align:center;font-size:10px;font-weight:bold;color:#0b1e3d">B</div>
<div class="t" style="-webkit-text-stroke:0.25px #0b1e3d;left:344px;top:202px;width:143px;text-align:center;font-size:10px;font-weight:bold;color:#0b1e3d">C</div>
<div class="t" style="-webkit-text-stroke:0.25px #474747;left:487px;top:202px;width:152px;text-align:center;font-size:10px;font-weight:normal;color:#474747">D</div>
<div class="t" style="-webkit-text-stroke:0.25px #474747;left:639px;top:202px;width:175px;text-align:center;font-size:10px;font-weight:normal;color:#474747">E</div>
<div class="t" style="-webkit-text-stroke:0.25px #474747;left:814px;top:202px;width:166px;text-align:center;font-size:10px;font-weight:normal;color:#474747">F</div>
<div class="t" style="-webkit-text-stroke:0.25px #474747;left:980px;top:202px;width:137px;text-align:center;font-size:10px;font-weight:normal;color:#474747">G</div>
<div class="t" style="-webkit-text-stroke:0.25px #474747;left:1117px;top:202px;width:90px;text-align:center;font-size:10px;font-weight:normal;color:#474747">H</div>
<div class="t" style="-webkit-text-stroke:0.25px #474747;left:1207px;top:202px;width:90px;text-align:center;font-size:10px;font-weight:normal;color:#474747">I</div>
<div class="cell" style="-webkit-text-stroke:0.1px #0b1e3d;left:0;top:217.5px;width:40px;height:21px;font-size:9.6px;line-height:12px;font-weight:bold;color:#0b1e3d">1</div>
<div class="cell" style="-webkit-text-stroke:0.1px #474747;left:0;top:239.5px;width:40px;height:20px;font-size:9.6px;line-height:12px;font-weight:normal;color:#474747">2</div>
<div class="cell" style="-webkit-text-stroke:0.1px #474747;left:0;top:260.5px;width:40px;height:32px;font-size:9.6px;line-height:12px;font-weight:normal;color:#474747">3</div>
<div class="cell" style="-webkit-text-stroke:0.1px #474747;left:0;top:293.5px;width:40px;height:46px;font-size:9.6px;line-height:12px;font-weight:normal;color:#474747">4</div>
<div class="cell" style="-webkit-text-stroke:0.1px #474747;left:0;top:340.5px;width:40px;height:32px;font-size:9.6px;line-height:12px;font-weight:normal;color:#474747">5</div>
<div class="cell" style="-webkit-text-stroke:0.1px #474747;left:0;top:373.5px;width:40px;height:46px;font-size:9.6px;line-height:12px;font-weight:normal;color:#474747">6</div>
<div class="cell" style="-webkit-text-stroke:0.1px #474747;left:0;top:420.5px;width:40px;height:46px;font-size:9.6px;line-height:12px;font-weight:normal;color:#474747">7</div>
<div class="cell" style="-webkit-text-stroke:0.1px #474747;left:0;top:467.5px;width:40px;height:18px;font-size:9.6px;line-height:12px;font-weight:normal;color:#474747">8</div>
<div class="cell" style="-webkit-text-stroke:0.1px #474747;left:0;top:486.5px;width:40px;height:18px;font-size:9.6px;line-height:12px;font-weight:normal;color:#474747">9</div>
<div class="cell" style="-webkit-text-stroke:0.1px #474747;left:0;top:505.5px;width:40px;height:145px;font-size:9.6px;line-height:12px;font-weight:normal;color:#474747">10</div>
<div class="cell" style="-webkit-text-stroke:0.1px #474747;left:0;top:651.5px;width:40px;height:17px;font-size:9.6px;line-height:12px;font-weight:normal;color:#474747">11</div>
<div class="cell" style="-webkit-text-stroke:0.1px #474747;left:0;top:669.5px;width:40px;height:18px;font-size:9.6px;line-height:12px;font-weight:normal;color:#474747">12</div>
<div class="cell" style="-webkit-text-stroke:0.1px #474747;left:0;top:688.5px;width:40px;height:18px;font-size:9.6px;line-height:12px;font-weight:normal;color:#474747">13</div>
<div class="cell" style="-webkit-text-stroke:0.1px #474747;left:0;top:707.5px;width:40px;height:17px;font-size:9.6px;line-height:12px;font-weight:normal;color:#474747">14</div>
<div class="cell" style="-webkit-text-stroke:0.1px #474747;left:0;top:725.5px;width:40px;height:18px;font-size:9.6px;line-height:12px;font-weight:normal;color:#474747">15</div>
<div class="cell" style="-webkit-text-stroke:0.1px #474747;left:0;top:744.5px;width:40px;height:18px;font-size:9.6px;line-height:12px;font-weight:normal;color:#474747">16</div>
<div class="t" style="left:43px;top:221.5px;font-size:15.4px;font-weight:bold;color:#000">Задача №1: Аналитика карточек на Ozon</div>
<div class="cell" style="left:41px;top:241px;width:178px;height:20px;justify-content:center;text-align:center;font-size:13.04px;line-height:16px;font-weight:normal;color:#062806;padding:2px 0px 0px 0px"><div>Название товара</div></div>
<div class="cell" style="left:220px;top:241px;width:124px;height:20px;justify-content:center;text-align:center;font-size:13.04px;line-height:16px;font-weight:normal;color:#062806;padding:2px 0px 0px 0px"><div>Цена</div></div>
<div class="cell" style="left:345px;top:241px;width:142px;height:20px;justify-content:center;text-align:center;font-size:13.04px;line-height:16px;font-weight:normal;color:#062806;padding:2px 0px 0px 0px"><div>Количество отзывов</div></div>
<div class="cell" style="left:488px;top:241px;width:151px;height:20px;justify-content:center;text-align:center;font-size:13.04px;line-height:16px;font-weight:normal;color:#062806;padding:2px 0px 0px 0px"><div>Средняя оценка</div></div>
<div class="cell" style="left:640px;top:241px;width:174px;height:20px;justify-content:center;text-align:center;font-size:13.04px;line-height:16px;font-weight:normal;color:#062806;padding:2px 0px 0px 0px"><div>Кол-во продаж за 30 дней</div></div>
<div class="cell" style="left:815px;top:241px;width:165px;height:20px;justify-content:center;text-align:center;font-size:13.04px;line-height:16px;font-weight:normal;color:#062806;padding:2px 0px 0px 0px"><div>Основные преимущества</div></div>
<div class="cell" style="left:981px;top:241px;width:136px;height:20px;justify-content:center;text-align:center;font-size:13.04px;line-height:16px;font-weight:normal;color:#062806;padding:2px 0px 0px 0px"><div>Недостатки</div></div>
<div class="cell" style="left:41px;top:262px;width:178px;height:32px;justify-content:flex-end;text-align:center;font-size:11.8px;line-height:14.2px;font-weight:normal;color:#000;padding:0px 0px 1px 0px"><div>Детская караоке система с 2<br>микрофонами и колонкой</div></div>
<div class="cell" style="left:220px;top:262px;width:124px;height:32px;justify-content:flex-end;text-align:center;font-size:11.8px;line-height:14.2px;font-weight:normal;color:#000;padding:0px 0px 1px 0px"><div>896 <svg style="position:static;display:inline-block;vertical-align:0px;margin-left:0.5px" width="6.5" height="8" viewBox="0 0 6.5 8"><path d="M2.2 0.4 V7.8 M0.8 0.8 H3.7 A2 2 0 0 1 3.7 4.8 H0.6 M0.6 6.2 H4.2" fill="none" stroke="#111" stroke-width="1.05"/></svg></div></div>
<div class="cell" style="left:345px;top:262px;width:142px;height:32px;justify-content:flex-end;text-align:center;font-size:11.8px;line-height:14.2px;font-weight:normal;color:#000;padding:0px 0px 1px 0px"><div>6247</div></div>
<div class="cell" style="left:488px;top:262px;width:151px;height:32px;justify-content:flex-end;text-align:center;font-size:11.8px;line-height:14.2px;font-weight:normal;color:#000;padding:0px 0px 1px 0px"><div>4.8</div></div>
<div class="cell" style="left:640px;top:262px;width:174px;height:32px;justify-content:flex-end;text-align:center;font-size:11.8px;line-height:14.2px;font-weight:normal;color:#000;padding:0px 0px 1px 0px"><div>~18700</div></div>
<div class="cell" style="left:815px;top:262px;width:165px;height:32px;justify-content:flex-end;text-align:center;font-size:11.8px;line-height:14.2px;font-weight:normal;color:#000;padding:0px 0px 1px 0px"><div>Bluetooth, компактная, яркий<br>дизайн, удобна детям</div></div>
<div class="cell" style="left:981px;top:262px;width:136px;height:32px;justify-content:flex-end;text-align:center;font-size:11.8px;line-height:14.2px;font-weight:normal;color:#000;padding:0px 0px 1px 0px"><div>Нет экрана, быстрая<br>разрядка батареи</div></div>
<div class="cell" style="left:41px;top:295px;width:178px;height:46px;justify-content:center;text-align:center;font-size:11.8px;line-height:14.2px;font-weight:normal;color:#000;padding:2px 0px 0px 0px"><div>Караоке система HouseUp</div></div>
<div class="cell" style="left:220px;top:295px;width:124px;height:46px;justify-content:center;text-align:center;font-size:11.8px;line-height:14.2px;font-weight:normal;color:#000;padding:2px 0px 0px 0px"><div>5509 <svg style="position:static;display:inline-block;vertical-align:0px;margin-left:0.5px" width="6.5" height="8" viewBox="0 0 6.5 8"><path d="M2.2 0.4 V7.8 M0.8 0.8 H3.7 A2 2 0 0 1 3.7 4.8 H0.6 M0.6 6.2 H4.2" fill="none" stroke="#111" stroke-width="1.05"/></svg></div></div>
<div class="cell" style="left:345px;top:295px;width:142px;height:46px;justify-content:center;text-align:center;font-size:11.8px;line-height:14.2px;font-weight:normal;color:#000;padding:2px 0px 0px 0px"><div>1084</div></div>
<div class="cell" style="left:488px;top:295px;width:151px;height:46px;justify-content:center;text-align:center;font-size:11.8px;line-height:14.2px;font-weight:normal;color:#000;padding:2px 0px 0px 0px"><div>4.7</div></div>
<div class="cell" style="left:640px;top:295px;width:174px;height:46px;justify-content:center;text-align:center;font-size:11.8px;line-height:14.2px;font-weight:normal;color:#000;padding:2px 0px 0px 0px"><div>~3200</div></div>
<div class="cell" style="left:815px;top:295px;width:165px;height:46px;justify-content:center;text-align:center;font-size:11.8px;line-height:14.2px;font-weight:normal;color:#000;padding:2px 0px 0px 0px"><div>2 беспроводных микрофона,<br>Bluetooth, удобный<br>интерфейс</div></div>
<div class="cell" style="left:981px;top:295px;width:136px;height:46px;justify-content:center;text-align:center;font-size:11.8px;line-height:14.2px;font-weight:normal;color:#000;padding:2px 0px 0px 0px"><div>Нет экрана, нет<br>функции записи</div></div>
<div class="cell" style="left:41px;top:342px;width:178px;height:32px;justify-content:center;text-align:center;font-size:11.8px;line-height:14.2px;font-weight:normal;color:#000;padding:2px 0px 0px 0px"><div>Детская колонка с<br>микрофонами</div></div>
<div class="cell" style="left:220px;top:342px;width:124px;height:32px;justify-content:center;text-align:center;font-size:11.8px;line-height:14.2px;font-weight:normal;color:#000;padding:2px 0px 0px 0px"><div>704 <svg style="position:static;display:inline-block;vertical-align:0px;margin-left:0.5px" width="6.5" height="8" viewBox="0 0 6.5 8"><path d="M2.2 0.4 V7.8 M0.8 0.8 H3.7 A2 2 0 0 1 3.7 4.8 H0.6 M0.6 6.2 H4.2" fill="none" stroke="#111" stroke-width="1.05"/></svg></div></div>
<div class="cell" style="left:345px;top:342px;width:142px;height:32px;justify-content:center;text-align:center;font-size:11.8px;line-height:14.2px;font-weight:normal;color:#000;padding:2px 0px 0px 0px"><div>1807</div></div>
<div class="cell" style="left:488px;top:342px;width:151px;height:32px;justify-content:center;text-align:center;font-size:11.8px;line-height:14.2px;font-weight:normal;color:#000;padding:2px 0px 0px 0px"><div>4.8</div></div>
<div class="cell" style="left:640px;top:342px;width:174px;height:32px;justify-content:center;text-align:center;font-size:11.8px;line-height:14.2px;font-weight:normal;color:#000;padding:2px 0px 0px 0px"><div>~5400</div></div>
<div class="cell" style="left:815px;top:342px;width:165px;height:32px;justify-content:center;text-align:center;font-size:11.8px;line-height:14.2px;font-weight:normal;color:#000;padding:2px 0px 0px 0px"><div>Компактная, яркая,<br>Bluetooth, лёгкая и простая</div></div>
<div class="cell" style="left:981px;top:342px;width:136px;height:32px;justify-content:center;text-align:center;font-size:11.8px;line-height:14.2px;font-weight:normal;color:#000;padding:2px 0px 0px 0px"><div>Тихий звук, слабые<br>микрофоны</div></div>
<div class="cell" style="left:41px;top:375px;width:178px;height:46px;justify-content:center;text-align:center;font-size:11.8px;line-height:14.2px;font-weight:normal;color:#000;padding:2px 0px 0px 0px"><div>Караоке система Vita Musica<br>(серебристая)</div></div>
<div class="cell" style="left:220px;top:375px;width:124px;height:46px;justify-content:center;text-align:center;font-size:11.8px;line-height:14.2px;font-weight:normal;color:#000;padding:2px 0px 0px 0px"><div>3068 <svg style="position:static;display:inline-block;vertical-align:0px;margin-left:0.5px" width="6.5" height="8" viewBox="0 0 6.5 8"><path d="M2.2 0.4 V7.8 M0.8 0.8 H3.7 A2 2 0 0 1 3.7 4.8 H0.6 M0.6 6.2 H4.2" fill="none" stroke="#111" stroke-width="1.05"/></svg></div></div>
<div class="cell" style="left:345px;top:375px;width:142px;height:46px;justify-content:center;text-align:center;font-size:11.8px;line-height:14.2px;font-weight:normal;color:#000;padding:2px 0px 0px 0px"><div>643</div></div>
<div class="cell" style="left:488px;top:375px;width:151px;height:46px;justify-content:center;text-align:center;font-size:11.8px;line-height:14.2px;font-weight:normal;color:#000;padding:2px 0px 0px 0px"><div>4.8</div></div>
<div class="cell" style="left:640px;top:375px;width:174px;height:46px;justify-content:center;text-align:center;font-size:11.8px;line-height:14.2px;font-weight:normal;color:#000;padding:2px 0px 0px 0px"><div>~1900</div></div>
<div class="cell" style="left:815px;top:375px;width:165px;height:46px;justify-content:center;text-align:center;font-size:11.8px;line-height:14.2px;font-weight:normal;color:#000;padding:2px 0px 0px 0px"><div>2 микрофона, Bluetooth,<br>удобный микшер, хороший<br>звук</div></div>
<div class="cell" style="left:981px;top:375px;width:136px;height:46px;justify-content:center;text-align:center;font-size:11.8px;line-height:14.2px;font-weight:normal;color:#000;padding:2px 0px 0px 0px"><div>Нет экрана, нет записи<br>исполнения</div></div>
<div class="cell" style="left:41px;top:422px;width:178px;height:46px;justify-content:center;text-align:center;font-size:11.8px;line-height:14.2px;font-weight:normal;color:#000;padding:2px 0px 0px 0px"><div>Караоке система Vita Musica (с<br>экраном)</div></div>
<div class="cell" style="left:220px;top:422px;width:124px;height:46px;justify-content:center;text-align:center;font-size:11.8px;line-height:14.2px;font-weight:normal;color:#000;padding:2px 0px 0px 0px"><div>6340 <svg style="position:static;display:inline-block;vertical-align:0px;margin-left:0.5px" width="6.5" height="8" viewBox="0 0 6.5 8"><path d="M2.2 0.4 V7.8 M0.8 0.8 H3.7 A2 2 0 0 1 3.7 4.8 H0.6 M0.6 6.2 H4.2" fill="none" stroke="#111" stroke-width="1.05"/></svg></div></div>
<div class="cell" style="left:345px;top:422px;width:142px;height:46px;justify-content:center;text-align:center;font-size:11.8px;line-height:14.2px;font-weight:normal;color:#000;padding:2px 0px 0px 0px"><div>513</div></div>
<div class="cell" style="left:488px;top:422px;width:151px;height:46px;justify-content:center;text-align:center;font-size:11.8px;line-height:14.2px;font-weight:normal;color:#000;padding:2px 0px 0px 0px"><div>4.8</div></div>
<div class="cell" style="left:640px;top:422px;width:174px;height:46px;justify-content:center;text-align:center;font-size:11.8px;line-height:14.2px;font-weight:normal;color:#000;padding:2px 0px 0px 0px"><div>~1500</div></div>
<div class="cell" style="left:815px;top:422px;width:165px;height:46px;justify-content:center;text-align:center;font-size:11.8px;line-height:14.2px;font-weight:normal;color:#000;padding:2px 0px 0px 0px"><div>2 микрофона, экран, смена<br>голоса, Bluetooth, AUX, SD,<br>USB</div></div>
<div class="cell" style="left:981px;top:422px;width:136px;height:46px;justify-content:center;text-align:center;font-size:11.8px;line-height:14.2px;font-weight:normal;color:#000;padding:2px 0px 0px 0px"><div>Более высокая цена</div></div>
<div class="cell" style="left:41px;top:488px;width:598px;height:18px;justify-content:center;text-align:center;font-size:11.8px;line-height:14px;font-weight:normal;color:#05184a;padding:0px 0px 0px 0px"><div>Вывод</div></div>
<div class="t" style="left:43px;top:509px;font-size:11.8px;line-height:14.2px;color:#000;-webkit-text-stroke:0.12px #000">Что делает товары популярными:<br><br>Низкая цена + большие скидки (до 85–94%).<br>Компактность, беспроводные микрофоны и Bluetooth.<br>Привлекательный дизайн и понятный функционал.<br>Высокие оценки и большое количество отзывов.</div>
<div class="t" style="left:347px;top:509px;font-size:11.8px;line-height:14.2px;color:#000;-webkit-text-stroke:0.12px #000">Что можно улучшить в карточках:<br><br>Добавить инфографику с преимуществами прямо<br>на фото.<br>Уточнить УТП в заголовке (например: “2 микрофона<br>+ 10 часов автономной работы”).<br>Добавить видеообзор с демонстрацией звука и<br>функций.<br>Упростить длинные описания и разбить их на<br>блоки.</div>
<div class="a" style="left:40px;top:218px;width:448px;height:24px;border:2px solid #2a62cc"></div>
<div class="a" style="left:483px;top:237px;width:9px;height:9px;border-radius:50%;background:#1652c8;border:1.5px solid #fff"></div>
<div class="a" style="left:0;top:755px;width:1280px;height:12px;background:linear-gradient(#f4f5f6,#fafbfb)"></div>
<div class="a" style="left:40px;top:755px;width:1px;height:12px;background:#c4c7c5"></div>
<div class="a" style="left:43px;top:757px;width:528px;height:8px;border-radius:4px;background:#dadce0"></div>
<div class="a" style="left:1269px;top:197px;width:11px;height:570px;background:#fff"></div>
<div class="a" style="left:1269px;top:197px;width:1px;height:570px;background:#e8e8e8"></div>
<div class="a" style="left:1270px;top:197px;width:10px;height:21px;background:#f6f7f8"></div>
<div class="a" style="left:1272px;top:220px;width:7px;height:23px;border-radius:4px;background:#dadce0"></div>
<div class="a" style="left:1270px;top:727px;width:10px;height:14px;background:#f8f9fa;border-top:1px solid #e0e0e0;border-bottom:1px solid #e0e0e0"></div>
<svg style="left:1273px;top:732px" width="5" height="3" viewBox="0 0 5 3"><path d="M0 3 L2.5 0 L5 3Z" fill="#9a9a9a"/></svg>
<svg style="left:1273px;top:747px" width="5" height="3" viewBox="0 0 5 3"><path d="M0 0 L2.5 3 L5 0Z" fill="#9a9a9a"/></svg>
<div class="a" style="left:1241px;top:756px;width:28px;height:11px;background:#f8f9fa"></div>
<svg style="left:1248px;top:758.5px" width="3.5" height="5" viewBox="0 0 3.5 5"><path d="M3.5 0 L0 2.5 L3.5 5Z" fill="#9a9a9a"/></svg>
<svg style="left:1262.5px;top:758.5px" width="3.5" height="5" viewBox="0 0 3.5 5"><path d="M0 0 L3.5 2.5 L0 5Z" fill="#9a9a9a"/></svg>
<div class="a" style="left:0;top:767px;width:1280px;height:33px;background:#f9fbfd;border-top:1px solid #e3e3e3"></div>
<svg style="left:50px;top:779.5px" width="10" height="10" viewBox="0 0 10 10"><path d="M5 0.3 V9.3 M0.3 4.8 H9.6" stroke="#444746" stroke-width="1.5"/></svg>
<svg style="left:84px;top:779px" width="13" height="10" viewBox="0 0 13 10"><path d="M0 1.8 H12.5 M0 5.1 H12.5 M0 8.4 H12.5" stroke="#444746" stroke-width="1.4"/></svg>
<div class="a" style="left:119px;top:768px;width:307px;height:32px;background:#e1e9f7"></div>
<div class="t" style="left:130px;top:777px;font-size:13.08px;font-weight:bold;color:#3763c8;letter-spacing:0.1px">Задача №1: Аналитика карточек на Ozon</div>
<svg style="left:406px;top:782px" width="9" height="5" viewBox="0 0 9 5"><path d="M0.5 0.5 H8.5 L4.5 4.5Z" fill="#3763c8"/></svg>
<div class="t" style="left:437px;top:769px;font-size:13.2px;line-height:15.5px;color:#444746;letter-spacing:0.2px;-webkit-text-stroke:0.15px #444746">"Задача №3: Работа в таблицах<br>"</div>
<svg style="left:649px;top:783px" width="7" height="4" viewBox="0 0 7 4"><path d="M0 0 H7 L3.5 3.6Z" fill="#444746"/></svg>
<svg style="left:1251px;top:779px" width="8" height="12" viewBox="0 0 8 12"><path d="M6.5 1 L1.5 6 L6.5 11" fill="none" stroke="#444746" stroke-width="1.7"/></svg>
</body></html>
